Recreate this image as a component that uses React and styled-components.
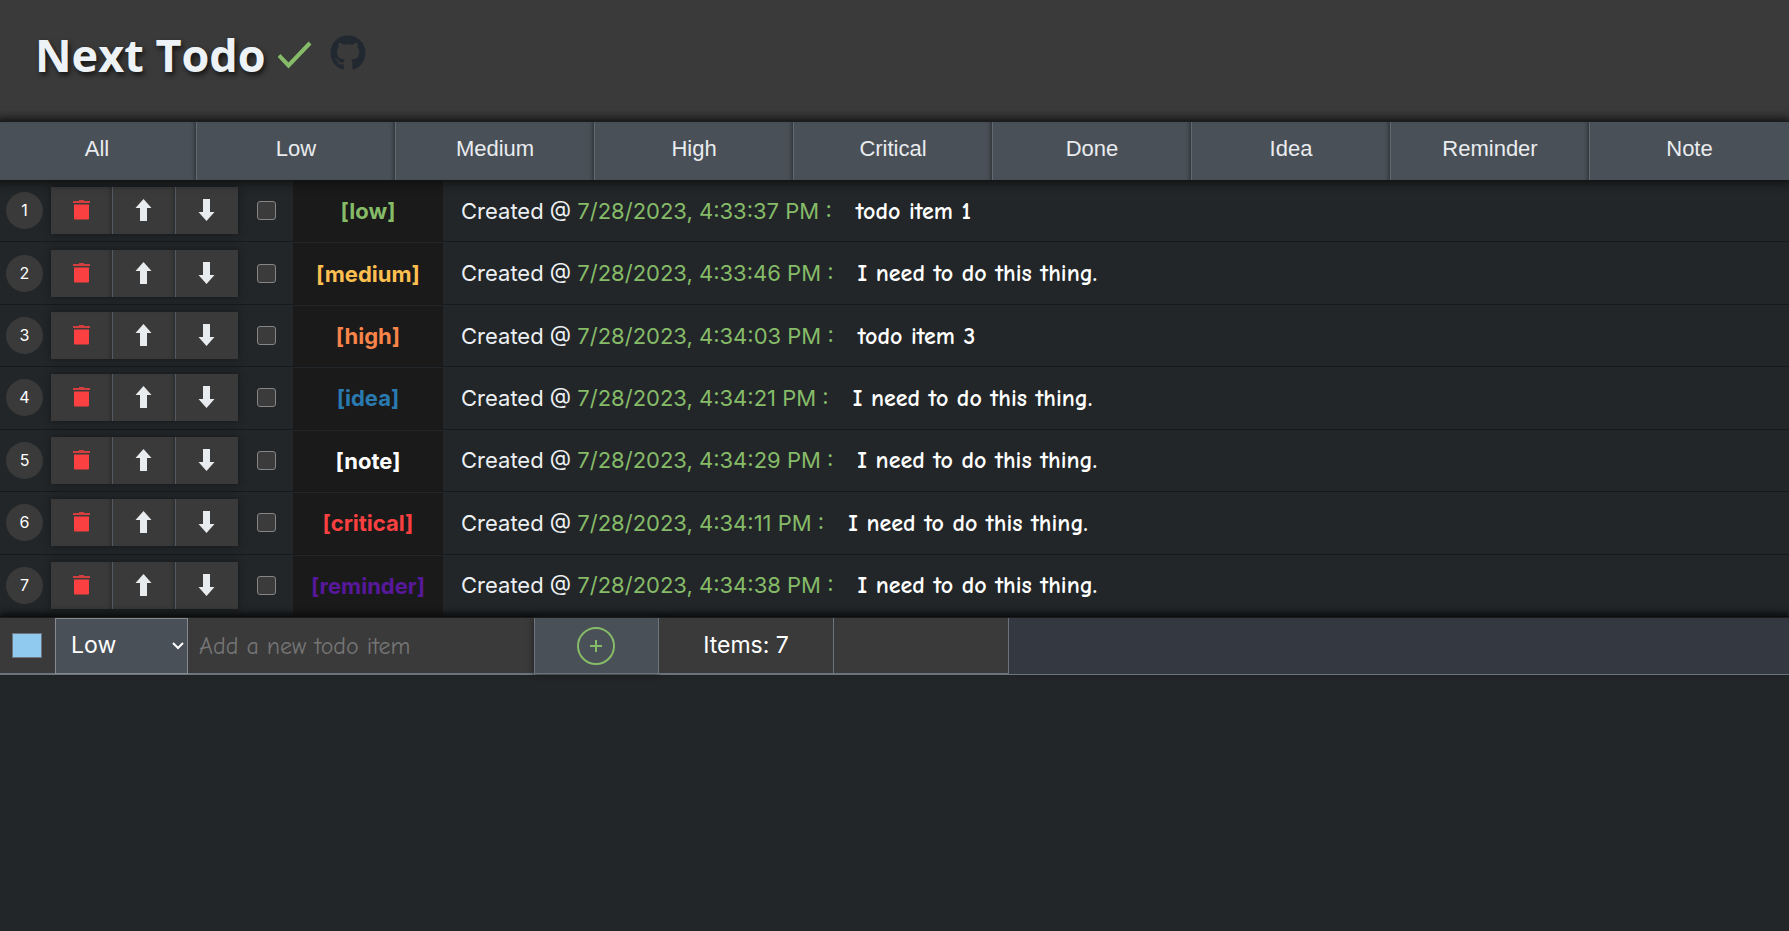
import React, { useState } from "react";
import styled, { createGlobalStyle } from "styled-components";
import { FaGithub } from "react-icons/fa";

const Global = createGlobalStyle`
  *, *::before, *::after { box-sizing: border-box; }
  body {
    margin: 0;
    background: #222628;
    color: #edf0f3;
    font-family: Inter, "Liberation Sans", sans-serif;
    font-size: 22px;
  }
  button, input, select { margin: 0; border-radius: 0; font: inherit; color: inherit; }
`;

const handwriting = `"Comic Sans MS", "Comic Neue", "Open Sans", sans-serif`;

const Page = styled.div`
  display: flex;
  flex-direction: column;
  min-height: 100vh;
  overflow-x: hidden;
`;

const Header = styled.header`
  display: flex;
  align-items: center;
  height: 121px;
  padding: 0 35px 12px;
  background: #3a3a3a;
`;

const Title = styled.h1`
  margin: 0;
  font: 700 45px/64px "Open Sans", "Noto Sans", sans-serif;
  color: #edf2f6;
  text-shadow: 2px 3px 5px #151515;
`;

const CheckMark = styled.svg`
  width: 34px;
  height: 28px;
  margin-left: 12px;
  fill: none;
  stroke: #86bb68;
  stroke-width: 4;
`;

const RepoLink = styled.a`
  display: flex;
  margin: 0 0 4px 18px;
  color: #212830;
`;

const Tabs = styled.nav`
  position: relative;
  display: grid;
  grid-template-columns: repeat(9, 1fr);
  height: 59px;
  margin-left: -2px;
  border-top: 1px solid #1b1d1f;
  background: #495057;
  box-shadow: 0 0 9px 2px #0b0c0d;
`;

const Tab = styled.button`
  padding: 0 0 5px;
  border: 0;
  border-right: 1px solid #5f6a72;
  background: #495057;
  box-shadow: inset -4px 0 4px -3px #292d31;
  font: 22px/28px "Liberation Sans", Arial, sans-serif;
  color: #e9ecef;
  &:last-child { border-right: 0; box-shadow: none; }
`;

const List = styled.ol`
  display: grid;
  grid-auto-rows: 1fr;
  min-height: 437px;
  margin: 0;
  padding: 0;
  list-style: none;
`;

const Row = styled.li`
  display: flex;
  align-items: center;
  border-bottom: 1px solid #17191b;
`;

const Index = styled.span`
  width: 37px;
  margin: 0 8px 0 6px;
  border-radius: 50%;
  background: #3a3a3a;
  font-size: 16px;
  line-height: 37px;
  text-align: center;
  color: #fff;
`;

const Actions = styled.div`
  display: grid;
  grid-template-columns: 62px 63px 62px;
  height: 47px;
  background: #3a3a3a;
  box-shadow: 0 0 7px #15181a;
`;

const Action = styled.button`
  display: flex;
  align-items: center;
  justify-content: center;
  padding: 0 1px 1px 0;
  border: 0;
  border-right: 1px solid #535a61;
  background: #3a3a3a;
  box-shadow: inset -4px 0 4px -3px #292929;
  color: ${(p) => (p.$danger ? "#fa4040" : "#e9ecef")};
  svg { fill: currentColor; }
  &:last-child { border-right: 0; box-shadow: none; }
`;

const Tick = styled.input`
  appearance: none;
  width: 19px;
  height: 19px;
  && { margin: 0 17px 0 19px; border-radius: 3px; }
  border: 1px solid #858585;
  background: #3b3b3b;
`;

const Badge = styled.strong`
  display: flex;
  align-items: center;
  justify-content: center;
  align-self: stretch;
  width: 150px;
  border-top: 1px solid #222628;
  background: #1a1a1a;
  font-weight: 700;
  color: ${(p) => p.$color};
`;

const Entry = styled.p`
  margin: 0 0 0 18px;
  line-height: 32px;
  white-space: pre;
`;

const Stamp = styled.time`
  color: #86bb68;
`;

const Note = styled.span`
  margin-left: 24px;
  font-family: ${handwriting};
  font-size: 24px;
  font-weight: 700;
  color: #fff;
`;

const Composer = styled.form`
  position: relative;
  display: flex;
  height: 58px;
  border-top: 1px solid #1b1b1b;
  border-bottom: 1px solid #6c757d;
  background: #343841;
  box-shadow: 0 -4px 6px #0b0c0d;
`;

const SwatchCell = styled.label`
  display: flex;
  align-items: center;
  width: 55px;
  padding: 0 12px;
  border-bottom: 1px solid #6c757d;
  background: #3a3a3a;
`;

const Swatch = styled.input`
  appearance: none;
  width: 30px;
  height: 25px;
  padding: 0;
  border: 1px solid #6c757d;
  background: #90caee;
  &::-webkit-color-swatch-wrapper { padding: 0; }
  &::-webkit-color-swatch { border: 0; }
`;

const Priority = styled.div`
  position: relative;
  width: 133px;
  svg { position: absolute; right: 4px; top: 22px; pointer-events: none; }
`;

const Select = styled.select`
  appearance: none;
  width: 100%;
  height: 100%;
  padding: 0 15px 2px;
  border: 1px solid #858b90;
  background: #495057;
  font-size: 23px;
  color: #fff;
`;

const NewItem = styled.input`
  width: 346px;
  padding: 0 11px;
  border: 0;
  border-bottom: 1px solid #6c757d;
  background: #3a3a3a;
  font-family: ${handwriting};
  font-size: 24px;
  &::placeholder { color: #757575; }
`;

const Add = styled.button`
  display: flex;
  align-items: center;
  justify-content: center;
  width: 125px;
  padding: 0 2px 0 0;
  border: 1px solid #6c757d;
  border-top: 0;
  background: #495057;
  box-shadow: 0 0 6px #1c1c1c;
  svg { fill: none; stroke: #86bb68; stroke-width: 2; }
`;

const Status = styled.output`
  width: 175px;
  border: 1px solid #6c757d;
  border-width: 0 1px 1px 0;
  background: #3a3a3a;
  font-size: 23px;
  line-height: 54px;
  text-align: center;
  color: #fff;
`;

const TrashIcon = () => (
  <svg width="17" height="20" viewBox="0 0 17 20" aria-hidden="true">
    <path d="M6 0h5v1h6v2H0V1h6z" opacity="0.8" />
    <path d="M1 4.500h15V18.500q0 1-1 1H2q-1 0-1-1z" />
  </svg>
);

const ArrowIcon = ({ down }) => (
  <svg width="17" height="22" viewBox="0 0 17 22" aria-hidden="true">
    <path d={down ? "M8.500 22L.5 13H5V0h7v13h4.500z" : "M8.500 0L16.500 9H12v13H5V9H.5z"} />
  </svg>
);

const filters = ["All", "Low", "Medium", "High", "Critical", "Done", "Idea", "Reminder", "Note"];

const colors = {
  low: "#86bb68",
  medium: "#fdbf50",
  high: "#f9844a",
  idea: "#2a7ab0",
  note: "#ffffff",
  critical: "#fa4040",
  reminder: "#57189b",
};

const todos = [
  ["low", "4:33:37", "todo item 1"],
  ["medium", "4:33:46", "I need to do this thing."],
  ["high", "4:34:03", "todo item 3"],
  ["idea", "4:34:21", "I need to do this thing."],
  ["note", "4:34:29", "I need to do this thing."],
  ["critical", "4:34:11", "I need to do this thing."],
  ["reminder", "4:34:38", "I need to do this thing."],
];

export default function App() {
  const [draft, setDraft] = useState("");
  return (
    <Page>
      <Global />
      <Header>
        <Title>Next Todo</Title>
        <CheckMark viewBox="0 0 34 28" aria-hidden="true">
          <path d="M1 14.500L10.500 24.500L32 2" />
        </CheckMark>
        <RepoLink href="#repo" aria-label="GitHub repository">
          <FaGithub size={36} />
        </RepoLink>
      </Header>
      <Tabs aria-label="Filter">
        {filters.map((name) => (
          <Tab key={name} type="button">{name}</Tab>
        ))}
      </Tabs>
      <List>
        {todos.map(([kind, time, text], i) => (
          <Row key={kind}>
            <Index>{i + 1}</Index>
            <Actions>
              <Action type="button" $danger aria-label="Delete"><TrashIcon /></Action>
              <Action type="button" aria-label="Move up"><ArrowIcon /></Action>
              <Action type="button" aria-label="Move down"><ArrowIcon down /></Action>
            </Actions>
            <Tick type="checkbox" aria-label={`Done: ${text}`} />
            <Badge $color={colors[kind]}>[{kind}]</Badge>
            <Entry>
              Created @ <Stamp>7/28/2023, {time} PM :</Stamp>
              <Note>{text}</Note>
            </Entry>
          </Row>
        ))}
      </List>
      <Composer onSubmit={(e) => e.preventDefault()}>
        <SwatchCell>
          <Swatch type="color" defaultValue="#90caee" aria-label="Colour" />
        </SwatchCell>
        <Priority>
          <Select aria-label="Priority" defaultValue="Low">
            {filters.slice(1).map((name) => (
              <option key={name}>{name}</option>
            ))}
          </Select>
          <svg width="12" height="12" viewBox="0 0 12 12" fill="none" stroke="#fff" strokeWidth="2" aria-hidden="true">
            <path d="M1 3l5 5l5-5" />
          </svg>
        </Priority>
        <NewItem
          aria-label="New todo item"
          placeholder="Add a new todo item"
          value={draft}
          onChange={(e) => setDraft(e.target.value)}
        />
        <Add aria-label="Add item">
          <svg width="40" height="40" viewBox="0 0 40 40" aria-hidden="true">
            <circle cx="20" cy="20" r="18" />
            <path d="M20 14v12M14 20h12" />
          </svg>
        </Add>
        <Status>Items: 7</Status>
        <Status />
      </Composer>
    </Page>
  );
}
